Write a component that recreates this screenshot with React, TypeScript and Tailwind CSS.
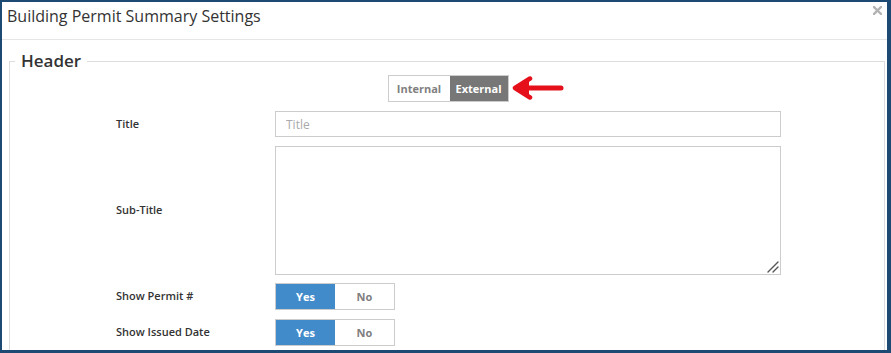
import { useState } from 'react'

function Segmented({
  options,
  value,
  onChange,
  activeClass,
  widths
}: {
  options: string[]
  value: string
  onChange: (v: string) => void
  activeClass: string
  widths: string[]
}) {
  return (
    <div className="flex w-fit h-[27px] border border-[#cccccc] bg-white">
      {options.map((opt, i) => (
        <button
          key={opt}
          onClick={() => onChange(opt)}
          className={`${widths[i]} h-full text-[11px] font-bold leading-none ${
            value === opt ? activeClass : 'bg-white text-[#808080]'
          }`}
        >
          {opt}
        </button>
      ))}
    </div>
  )
}

function RedArrow() {
  return (
    <svg width="52" height="24" viewBox="0 0 52 24" className="absolute left-full top-[1px] ml-[3px]">
      <path d="M6 12 L49 12" stroke="#e5101a" strokeWidth="5" strokeLinecap="round" />
      <path d="M18 2.5 L3 12 L18 21.5" stroke="#e5101a" strokeWidth="4.5" strokeLinecap="round" strokeLinejoin="round" fill="none" />
      <path d="M17 4 L5 12 L17 20 Z" fill="#e5101a" />
    </svg>
  )
}

export default function App() {
  const [mode, setMode] = useState('External')
  const [showPermit, setShowPermit] = useState('Yes')
  const [showIssued, setShowIssued] = useState('Yes')

  return (
    <div
      className="w-[891px] h-[353px] overflow-hidden bg-white border-solid border-[#1c4a72] border-t-2 border-l-2 border-r-4 border-b-[3px] text-[#333333]"
      style={{ fontFamily: '"Open Sans", "Liberation Sans", sans-serif' }}
    >
      <div className="h-[38px] border-b border-[#e5e5e5] flex justify-between pl-[5px] pr-[5px]">
        <h1 className="text-[16px] leading-[24px] pt-[2px] font-normal">Building Permit Summary Settings</h1>
        <svg width="9" height="9" viewBox="0 0 9 9" className="mt-[4px]">
          <path d="M1 1 L8 8 M8 1 L1 8" stroke="#b3b3b3" strokeWidth="2.4" strokeLinecap="square" />
        </svg>
      </div>

      <fieldset className="ml-[7px] mr-[2px] mt-[9px] border border-[#dddddd] pb-4">
        <legend className="ml-[5px] px-[6px] text-[17px] leading-[24px] font-semibold text-[#333333]">Header</legend>

        <div className="flex justify-center mt-[2px] pl-[2px]">
          <div className="relative">
            <Segmented
              options={['Internal', 'External']}
              value={mode}
              onChange={setMode}
              activeClass="bg-[#777777] text-white"
              widths={['w-[61px]', 'w-[58px]']}
            />
            <RedArrow />
          </div>
        </div>

        <div className="grid grid-cols-[159px_506px] items-center gap-y-[9px] pl-[106px] mt-[9px] text-[11px] font-semibold">
          <label>Title</label>
          <input
            placeholder="Title"
            className="h-[26px] border border-[#cccccc] px-[10px] text-[12px] font-normal text-[#555555] placeholder:text-[#aaaaaa] outline-none"
          />

          <label>Sub-Title</label>
          <div className="relative h-[129px]">
            <textarea className="block w-full h-full resize-none border border-[#cccccc] px-[10px] py-[5px] text-[12px] font-normal outline-none" />
            <svg width="12" height="12" viewBox="0 0 12 12" className="absolute right-[2px] bottom-[2px] pointer-events-none">
              <path d="M1 11 L11 1 M6 11 L11 6" stroke="#555555" strokeWidth="1.4" strokeLinecap="round" />
            </svg>
          </div>

          <label className="mt-[-1px]">Show Permit #</label>
          <div className="mt-[-1px]">
            <Segmented
              options={['Yes', 'No']}
              value={showPermit}
              onChange={setShowPermit}
              activeClass="bg-[#428bca] text-white"
              widths={['w-[59px]', 'w-[59px]']}
            />
          </div>

          <label>Show Issued Date</label>
          <div>
            <Segmented
              options={['Yes', 'No']}
              value={showIssued}
              onChange={setShowIssued}
              activeClass="bg-[#428bca] text-white"
              widths={['w-[59px]', 'w-[59px]']}
            />
          </div>
        </div>
      </fieldset>
    </div>
  )
}
